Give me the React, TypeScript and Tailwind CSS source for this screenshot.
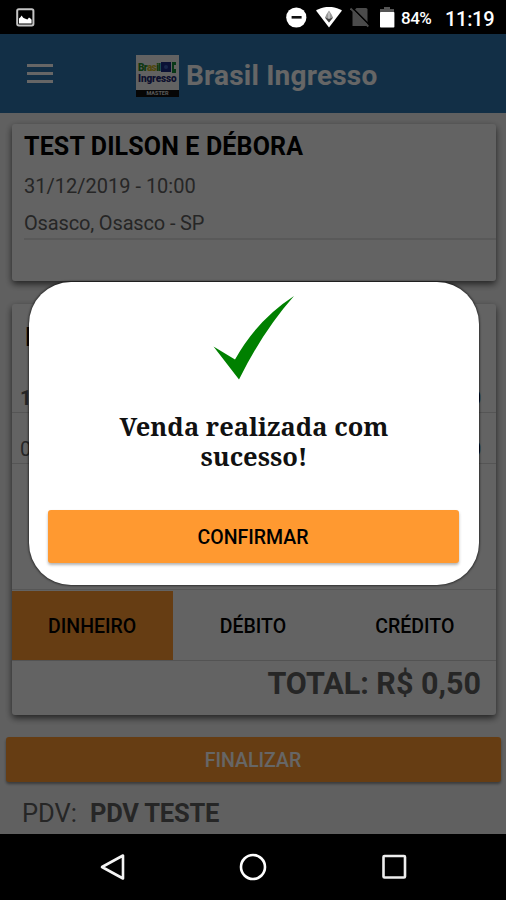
import type { ReactNode } from "react";

function StatusBar() {
  return (
    <header className="flex h-[34px] shrink-0 items-center bg-black pl-4 text-white">
      <svg width="19" height="19" viewBox="0 0 19 19">
        <rect x="1.2" y="1.2" width="16.2" height="16.2" rx="1.6" fill="none" stroke="#c4c4c4" strokeWidth="2" />
        <path d="M3 15.500v-5l1.400-1.200 1.200-1.800 1.600 2.200 2.200 1 2 .8 1.600-2 1.800 1.200.8 1v3.800z" fill="#fff" />
      </svg>
      <svg className="ml-[251px]" width="21" height="21" viewBox="0 0 21 21">
        <circle cx="10.3" cy="10.5" r="10.1" fill="#fff" />
        <rect x="5.6" y="9" width="10" height="2.6" fill="#111" />
      </svg>
      <svg className="ml-[9px]" width="26" height="21" viewBox="0 0 26 21">
        <path d="M0 3.6C7.6-1.4 18.400-1.400 26 3.600L13 20.600z" fill="#fff" />
        <path d="M13 3.500l2.600 4 1.400 3-4 5-4-5 1.400-3z" fill="#999" />
        <path d="M9 10.500l4 1.500 4-1.500-4 5z" fill="#444" />
        <path d="M13 5.500v6" stroke="#ddd" strokeWidth="1" />
      </svg>
      <svg className="ml-[8px]" width="20" height="21" viewBox="0 0 20 21">
        <path d="M6.500 1H16q1.500 0 1.500 1.500V19H2.500V5z" fill="#4b4b4b" />
        <path d="M2 .5L19.500 18" stroke="#000" strokeWidth="1.600" />
        <path d="M.500 1.500L18.300 19.500" stroke="#4b4b4b" strokeWidth="1.800" />
      </svg>
      <svg className="ml-[9px]" width="16" height="21" viewBox="0 0 16 21">
        <path d="M5 0h6v2h4v4H1V2h4z" fill="#555" />
        <rect x="1" y="5" width="14.400" height="15.500" rx=".8" fill="#fff" />
      </svg>
      <span className="mt-[3px] ml-[6px] w-[32px] text-[17px] font-medium tracking-[-0.5px] whitespace-nowrap">84%</span>
      <span className="mt-[3px] ml-[12px] text-[20px] font-medium tracking-[-0.3px] whitespace-nowrap">11:19</span>
    </header>
  );
}

function Logo() {
  return (
    <div className="flex h-[42px] w-[43px] flex-col bg-[#f4f4f4]">
      <div className="flex h-[18px] items-end gap-px pl-[2px]">
        <span className="w-[22px] text-[10px] leading-[10px] font-black tracking-[-0.6px] text-[#238a2a]">
          Br<span className="text-[#c9b21d]">as</span>il
        </span>
        <svg width="16" height="11" viewBox="0 0 16 11">
          <rect y="0" width="10" height="10" fill="#1b2c85" />
          <circle cx="5" cy="5" r="2" fill="#3c62b8" />
          <path d="M11 0h4v3h-2v4h2v4h-4z" fill="#168c3a" />
        </svg>
      </div>
      <span className="h-[17px] pl-[2px] text-[10px] leading-[11px] font-black tracking-[-0.1px] text-[#222a72]">Ingresso</span>
      <span className="h-[7px] bg-[#111] text-center text-[5.500px] leading-[7px] font-bold text-[#ddd]">MASTER</span>
    </div>
  );
}

function Card({ className, children }: { className: string; children: ReactNode }) {
  return (
    <section className={`ml-[12px] flex w-[484px] flex-col rounded-[3px] bg-[#f8f8f8] shadow-[0_3px_7px_0_rgba(0,0,0,0.65)] ${className}`}>
      {children}
    </section>
  );
}

function SaleScreen() {
  return (
    <main className="flex h-[800px] flex-col bg-[#f1f1f1]">
      <div className="flex h-[79px] shrink-0 items-center bg-[#2f77ae] pl-[27px] pt-1">
        <div className="mb-[4px] flex w-[26px] flex-col gap-[5px]">
          <i className="h-[3px] bg-white" />
          <i className="h-[3px] bg-white" />
          <i className="h-[3px] bg-white" />
        </div>
        <div className="ml-[83px]"><Logo /></div>
        <h1 className="ml-[7px] text-[28px] font-bold tracking-[0.2px] whitespace-nowrap text-white">Brasil Ingresso</h1>
      </div>

      <Card className="mt-[11px] h-[157px] shrink-0 pl-[12px]">
        <h2 className="mt-[8px] text-[25px] leading-[30px] font-bold tracking-[0.15px] whitespace-nowrap text-black">TEST DILSON E DÉBORA</h2>
        <p className="mt-[9px] text-[20px] leading-[30px] text-[#606060]">31/12/2019 - 10:00</p>
        <p className="mt-[6px] border-b-2 border-[#dedede] pt-px text-[20px] leading-[30px] tracking-[-0.15px] text-[#606060]">Osasco, Osasco - SP</p>
      </Card>

      <Card className="mt-[23px] h-[411px] shrink-0">
        <div className="flex h-[62px] items-center pt-[5px] pl-[13px] text-[25px] font-bold">Ingressos</div>
        <div className="flex h-[47px] items-end justify-between border-b border-[#d5d5d5] pr-[15px] pl-[8px] text-[20px] leading-[27px]">
          <b className="text-[#606060]">1</b><b>0,50</b>
        </div>
        <div className="flex h-[51px] items-end justify-between border-b border-[#d5d5d5] pr-[15px] pl-[8px] text-[20px] leading-[27px]">
          <span className="text-[#606060]">0</span><b>0,00</b>
        </div>
        <div className="grow border-b border-[#d8d8d8]" />
        <div className="grid h-[71px] shrink-0 grid-cols-3 border-b border-[#d0d0d0] pt-px text-[19.500px] font-medium">
          <div className="flex items-center justify-center bg-[#ff9930] pt-[3px] pr-px">DINHEIRO</div>
          <div className="flex items-center justify-center pt-[3px] pr-[2px]">DÉBITO</div>
          <div className="flex items-center justify-center pt-[3px] pr-px">CRÉDITO</div>
        </div>
        <div className="h-[54px] shrink-0 pt-[4px] pr-[15px] text-right text-[30.500px] leading-[38px] font-bold text-[#606060]">TOTAL: R$ 0,50</div>
      </Card>

      <div className="mx-auto mt-[22px] flex h-[45px] w-[495px] shrink-0 items-center justify-center rounded-[3px] bg-[#ff9930] pt-[3px] text-[19.500px] font-medium text-white shadow-[0_2px_3px_rgba(0,0,0,0.4)]">FINALIZAR</div>
      <div className="mt-[15px] flex gap-[13px] pl-[22px] text-[25.500px] leading-[32px] text-[#606060]">
        <span>PDV:</span><b className="tracking-[-0.2px]">PDV TESTE</b>
      </div>
    </main>
  );
}

function SuccessDialog() {
  return (
    <div className="absolute inset-0 bg-black/60">
      <div role="dialog" className="absolute top-[248px] left-[29px] flex h-[303px] w-[450px] flex-col items-center rounded-[42px] bg-white pr-[21px] pl-[19px] shadow-[0_0_2px_1px_rgba(0,0,0,0.5)]">
        <svg className="mt-[13px] ml-[2px] shrink-0" width="82" height="86" viewBox="0 0 82 86">
          <path d="M.500 51.500L22 64.500Q44 25 81 1 50 36 26 84.500z" fill="#008000" />
        </svg>
        <p className="mt-[30px] ml-[2px] w-[330px] text-center font-['Noto_Serif','DejaVu_Serif_Condensed','DejaVu_Serif',serif] text-[25.500px] leading-[30px] font-bold text-[#111]">
          Venda realizada com<br />sucesso!
        </p>
        <button className="mt-[39px] flex h-[53px] w-[411px] shrink-0 items-center justify-center rounded-[3px] bg-[#ff9930] pt-[3px] text-[19.500px] font-medium text-black shadow-[0_2px_3px_rgba(0,0,0,0.3)]">CONFIRMAR</button>
      </div>
    </div>
  );
}

export default function App() {
  return (
    <div className="flex h-[900px] w-[506px] flex-col overflow-hidden bg-black font-['Roboto',sans-serif]">
      <StatusBar />
      <div className="relative h-[800px] shrink-0 overflow-hidden">
        <SaleScreen />
        <SuccessDialog />
      </div>
      <nav className="flex h-[66px] items-center justify-center gap-[113px] bg-black">
        <svg width="28" height="28" viewBox="0 0 28 28" fill="none" stroke="#f4f4f4" strokeWidth="2.600" strokeLinejoin="round">
          <path d="M25 2.500v23L4 14z" />
        </svg>
        <svg width="28" height="28" viewBox="0 0 28 28" fill="none" stroke="#fff" strokeWidth="2.600">
          <circle cx="14" cy="14" r="12" />
        </svg>
        <svg width="28" height="28" viewBox="0 0 28 28" fill="none" stroke="#eee" strokeWidth="2.600">
          <rect x="3.500" y="3" width="21.500" height="21.500" rx="1" />
        </svg>
      </nav>
    </div>
  );
}
